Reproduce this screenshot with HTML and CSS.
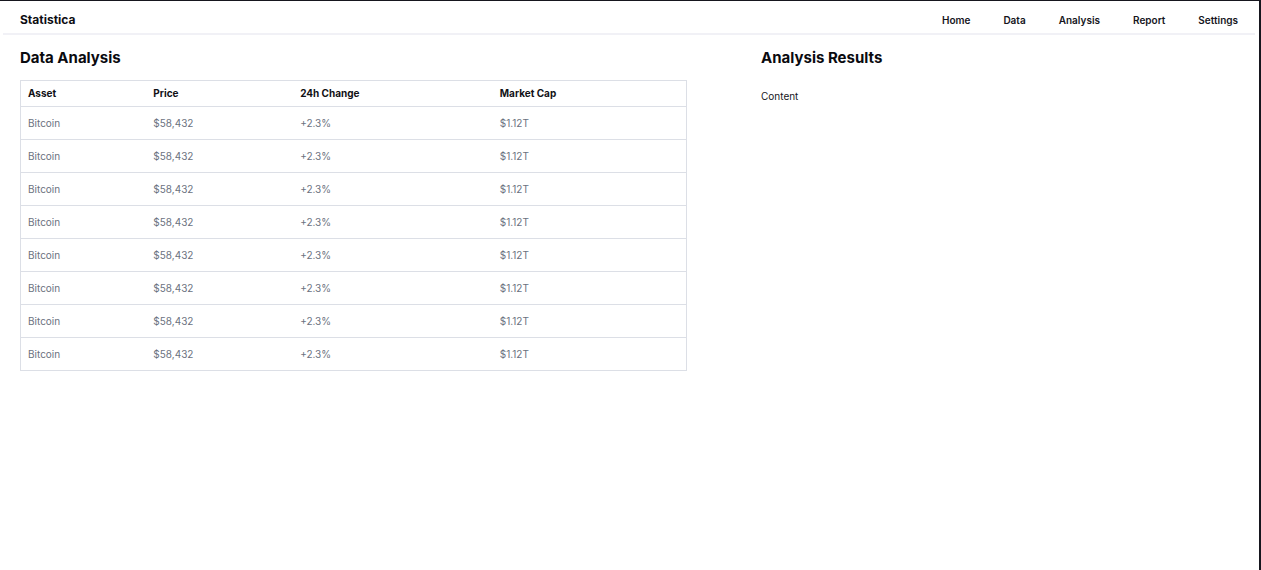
FILE: index.html
```html
<!DOCTYPE html>
<html lang="en">
<head>
<meta charset="utf-8">
<title>Statistica</title>
<link rel="stylesheet" href="styles.css">
</head>
<body>
<div class="frame">
  <header class="topbar">
    <div class="brand">Statistica</div>
    <nav class="nav">
      <a class="nav-link" href="#">Home</a>
      <a class="nav-link" href="#">Data</a>
      <a class="nav-link" href="#">Analysis</a>
      <a class="nav-link" href="#">Report</a>
      <a class="nav-link" href="#">Settings</a>
    </nav>
  </header>
  <main class="main">
    <section class="panel">
      <h2 class="title">Data Analysis</h2>
      <table class="table">
        <colgroup>
          <col class="c1"><col class="c2"><col class="c3"><col class="c4">
        </colgroup>
        <thead>
          <tr><th>Asset</th><th>Price</th><th>24h Change</th><th>Market Cap</th></tr>
        </thead>
        <tbody>
          <tr><td>Bitcoin</td><td>$58,432</td><td>+2.3%</td><td>$1.12T</td></tr>
          <tr><td>Bitcoin</td><td>$58,432</td><td>+2.3%</td><td>$1.12T</td></tr>
          <tr><td>Bitcoin</td><td>$58,432</td><td>+2.3%</td><td>$1.12T</td></tr>
          <tr><td>Bitcoin</td><td>$58,432</td><td>+2.3%</td><td>$1.12T</td></tr>
          <tr><td>Bitcoin</td><td>$58,432</td><td>+2.3%</td><td>$1.12T</td></tr>
          <tr><td>Bitcoin</td><td>$58,432</td><td>+2.3%</td><td>$1.12T</td></tr>
          <tr><td>Bitcoin</td><td>$58,432</td><td>+2.3%</td><td>$1.12T</td></tr>
          <tr><td>Bitcoin</td><td>$58,432</td><td>+2.3%</td><td>$1.12T</td></tr>
        </tbody>
      </table>
    </section>
    <section class="panel">
      <h2 class="title">Analysis Results</h2>
      <p class="content">Content</p>
    </section>
  </main>
</div>
</body>
</html>
```
FILE: styles.css
```css
* { box-sizing: border-box; }
html, body { margin: 0; padding: 0; background: #ffffff; }
body {
  font-family: Inter, "Noto Sans", "Liberation Sans", sans-serif;
  color: #111111;
}
.frame {
  height: 570px;
  border-top: 1px solid #16161e;
  border-right: 2px solid #16161e;
  overflow: hidden;
}
.topbar {
  display: flex;
  justify-content: space-between;
  align-items: center;
  margin: 0 4px 0 3px;
  padding: 12px 17px 6px;
  border-bottom: 2px solid #f1f1f6;
}
.brand {
  font-size: 12px;
  font-weight: 700;
  line-height: 14px;
  color: #0d0d12;
}
.nav {
  display: flex;
  gap: 33px;
}
.nav-link {
  font-size: 10px;
  font-weight: 600;
  line-height: 14px;
  color: #15151c;
  text-decoration: none;
}
.main {
  display: grid;
  grid-template-columns: 667px 1fr;
  gap: 74px;
  padding: 13px 20px 0;
}
.title {
  margin: 0;
  font-size: 15px;
  font-weight: 700;
  line-height: 19px;
  color: #0a0a0f;
}
.table {
  margin-top: 13px;
  width: 667px;
  border-collapse: collapse;
  border: 1px solid #dcdfe6;
  font-size: 10px;
  line-height: 12px;
}
.c1 { width: 126px; }
.c2 { width: 147px; }
.c3 { width: 200px; }
.c4 { width: 194px; }
.table th {
  text-align: left;
  font-weight: 700;
  color: #111116;
  padding: 6px 7px 7px;
  border-bottom: 1px solid #dcdfe6;
}
.table td {
  text-align: left;
  font-weight: 400;
  color: #6b7280;
  padding: 10px 7px;
  border-bottom: 1px solid #dcdfe6;
}
.content {
  margin: 22px 0 0;
  font-size: 10px;
  line-height: 14px;
  color: #15151c;
}
```
